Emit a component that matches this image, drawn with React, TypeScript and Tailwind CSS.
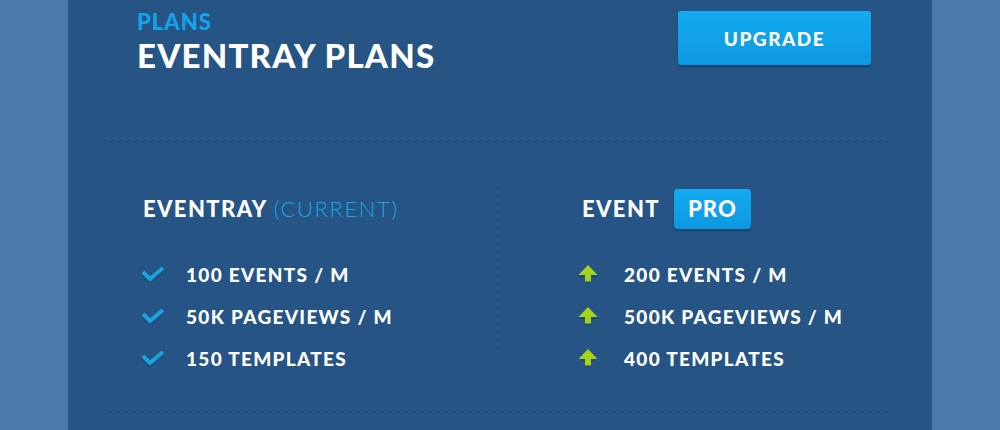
import React from "react";

const font = { fontFamily: "Lato, 'Noto Sans', sans-serif" };

function Check() {
  return (
    <svg width="26" height="18" viewBox="0 0 26 18" className="shrink-0">
      <polyline points="3,8 10,15 23,4" fill="none" stroke="#1b4a76" strokeWidth="4" strokeLinejoin="miter" transform="translate(0,1)" />
      <polyline points="3,7 10,14 23,3" fill="none" stroke="#1ca3dc" strokeWidth="4" strokeLinejoin="miter" />
    </svg>
  );
}

function Arrow() {
  return (
    <svg width="20" height="18" viewBox="0 0 20 18" className="shrink-0">
      <path d="M10 1 L19.5 11 L13 11 L13 17.5 L7 17.5 L7 11 L0.5 11 Z" fill="#1b4a76" transform="translate(0,1)" />
      <path d="M10 0 L19.5 10 L13 10 L13 16.5 L7 16.5 L7 10 L0.5 10 Z" fill="#a6d21c" />
    </svg>
  );
}

function Item({ icon, text }: { icon: React.ReactNode; text: string }) {
  return (
    <div className="flex h-[42px] items-center">
      <div className="flex w-[46px] items-center">{icon}</div>
      <span className="text-[19px] font-black uppercase leading-none tracking-[1.3px] text-white">{text}</span>
    </div>
  );
}

export default function App() {
  return (
    <div className="flex h-[430px] w-[1000px] overflow-hidden bg-[#4a7aac]" style={font}>
      <div className="ml-[68px] flex h-[430px] w-[864px] flex-col bg-[#265585]">
        {/* header */}
        <div className="flex h-[141px] items-start justify-between pl-[69px] pr-[61px]">
          <div className="flex flex-col pt-[11px]">
            <span className="text-[22px] font-black uppercase leading-[22px] tracking-[1px] text-[#14a3e9]">Plans</span>
            <span className="mt-[6px] text-[33px] font-black uppercase leading-[33px] tracking-[1.2px] text-white">Eventray Plans</span>
          </div>
          <button className="mt-[11px] flex h-[54px] w-[193px] items-center justify-center rounded-[3px] bg-[linear-gradient(#15abf1,#0c98e0)] shadow-[0_2px_2px_rgba(10,40,80,0.45)]">
            <span className="text-[19px] font-black uppercase leading-none tracking-[1.5px] text-white">Upgrade</span>
          </button>
        </div>
        <div className="mx-[42px] h-[2px] bg-[linear-gradient(to_right,#1c4773_2px,transparent_2px)] bg-[length:8px_2px]" />
        {/* plans */}
        <div className="flex h-[268px] px-[42px]">
          <div className="flex w-[387px] flex-col pl-[30px] pt-[46px]">
            <div className="flex h-[40px] items-center pl-[3px]">
              <span className="text-[22px] font-black uppercase leading-none tracking-[1.4px] text-white">Eventray</span>
              <span className="ml-[6px] text-[22px] font-light uppercase leading-none tracking-[1.6px] text-[#1aa5e8]">(Current)</span>
            </div>
            <div className="mt-[24px] flex flex-col">
              <Item icon={<Check />} text="100 Events / M" />
              <Item icon={<Check />} text="50K Pageviews / M" />
              <Item icon={<Check />} text="150 Templates" />
            </div>
          </div>
          <div className="mt-[44px] h-[164px] w-[2px] bg-[linear-gradient(#1c4773_2px,transparent_2px)] bg-[length:2px_8px]" />
          <div className="flex flex-col pl-[79px] pt-[46px]">
            <div className="flex h-[40px] items-center pl-[4px]">
              <span className="text-[22px] font-black uppercase leading-none tracking-[1.4px] text-white">Event</span>
              <span className="ml-[14px] flex h-[40px] w-[77px] items-center justify-center rounded-[4px] bg-[linear-gradient(#15abf1,#0c98e0)] shadow-[0_2px_2px_rgba(10,40,80,0.45)] text-[22px] font-black uppercase leading-none tracking-[1.2px] text-white">Pro</span>
            </div>
            <div className="mt-[24px] flex flex-col">
              <Item icon={<Arrow />} text="200 Events / M" />
              <Item icon={<Arrow />} text="500K Pageviews / M" />
              <Item icon={<Arrow />} text="400 Templates" />
            </div>
          </div>
        </div>
        <div className="mx-[42px] h-[2px] bg-[linear-gradient(to_right,#1c4773_2px,transparent_2px)] bg-[length:8px_2px]" />
      </div>
    </div>
  );
}
